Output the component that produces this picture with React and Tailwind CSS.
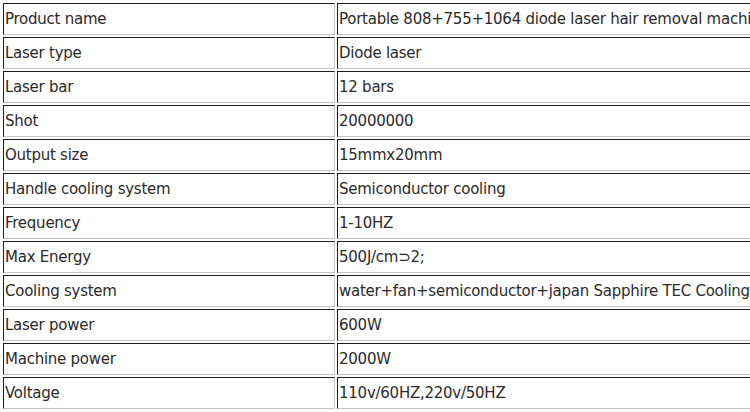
const specs = [
  ['Product name', 'Portable 808+755+1064 diode laser hair removal machine'],
  ['Laser type', 'Diode laser'],
  ['Laser bar', '12 bars'],
  ['Shot', '20000000'],
  ['Output size', '15mmx20mm'],
  ['Handle cooling system', 'Semiconductor cooling'],
  ['Frequency', '1-10HZ'],
  ['Max Energy', '500J/cm\u22832;'],
  ['Cooling system', 'water+fan+semiconductor+japan Sapphire TEC Cooling'],
  ['Laser power', '600W'],
  ['Machine power', '2000W'],
  ['Voltage', '110v/60HZ,220v/50HZ'],
];

const cell =
  'h-[32px] border border-t-[#1e1e1e] border-l-[#1e1e1e] border-b-[#c4c4c4] border-r-[#c4c4c4] px-px align-middle whitespace-nowrap';

export default function App() {
  return (
    <div className="w-[750px] h-[412px] overflow-hidden bg-white text-[#2a2a2a] font-['DejaVu_Sans',Verdana,sans-serif] text-[15px] tracking-[-0.25px]">
      <table className="w-[1000px] border border-white border-separate border-spacing-[2px] table-fixed">
        <colgroup>
          <col className="w-[332px]" />
          <col />
        </colgroup>
        <tbody>
          {specs.map(([name, value]) => (
            <tr key={name}>
              <td className={cell}>{name}</td>
              <td className={cell}>{value}</td>
            </tr>
          ))}
        </tbody>
      </table>
    </div>
  );
}
